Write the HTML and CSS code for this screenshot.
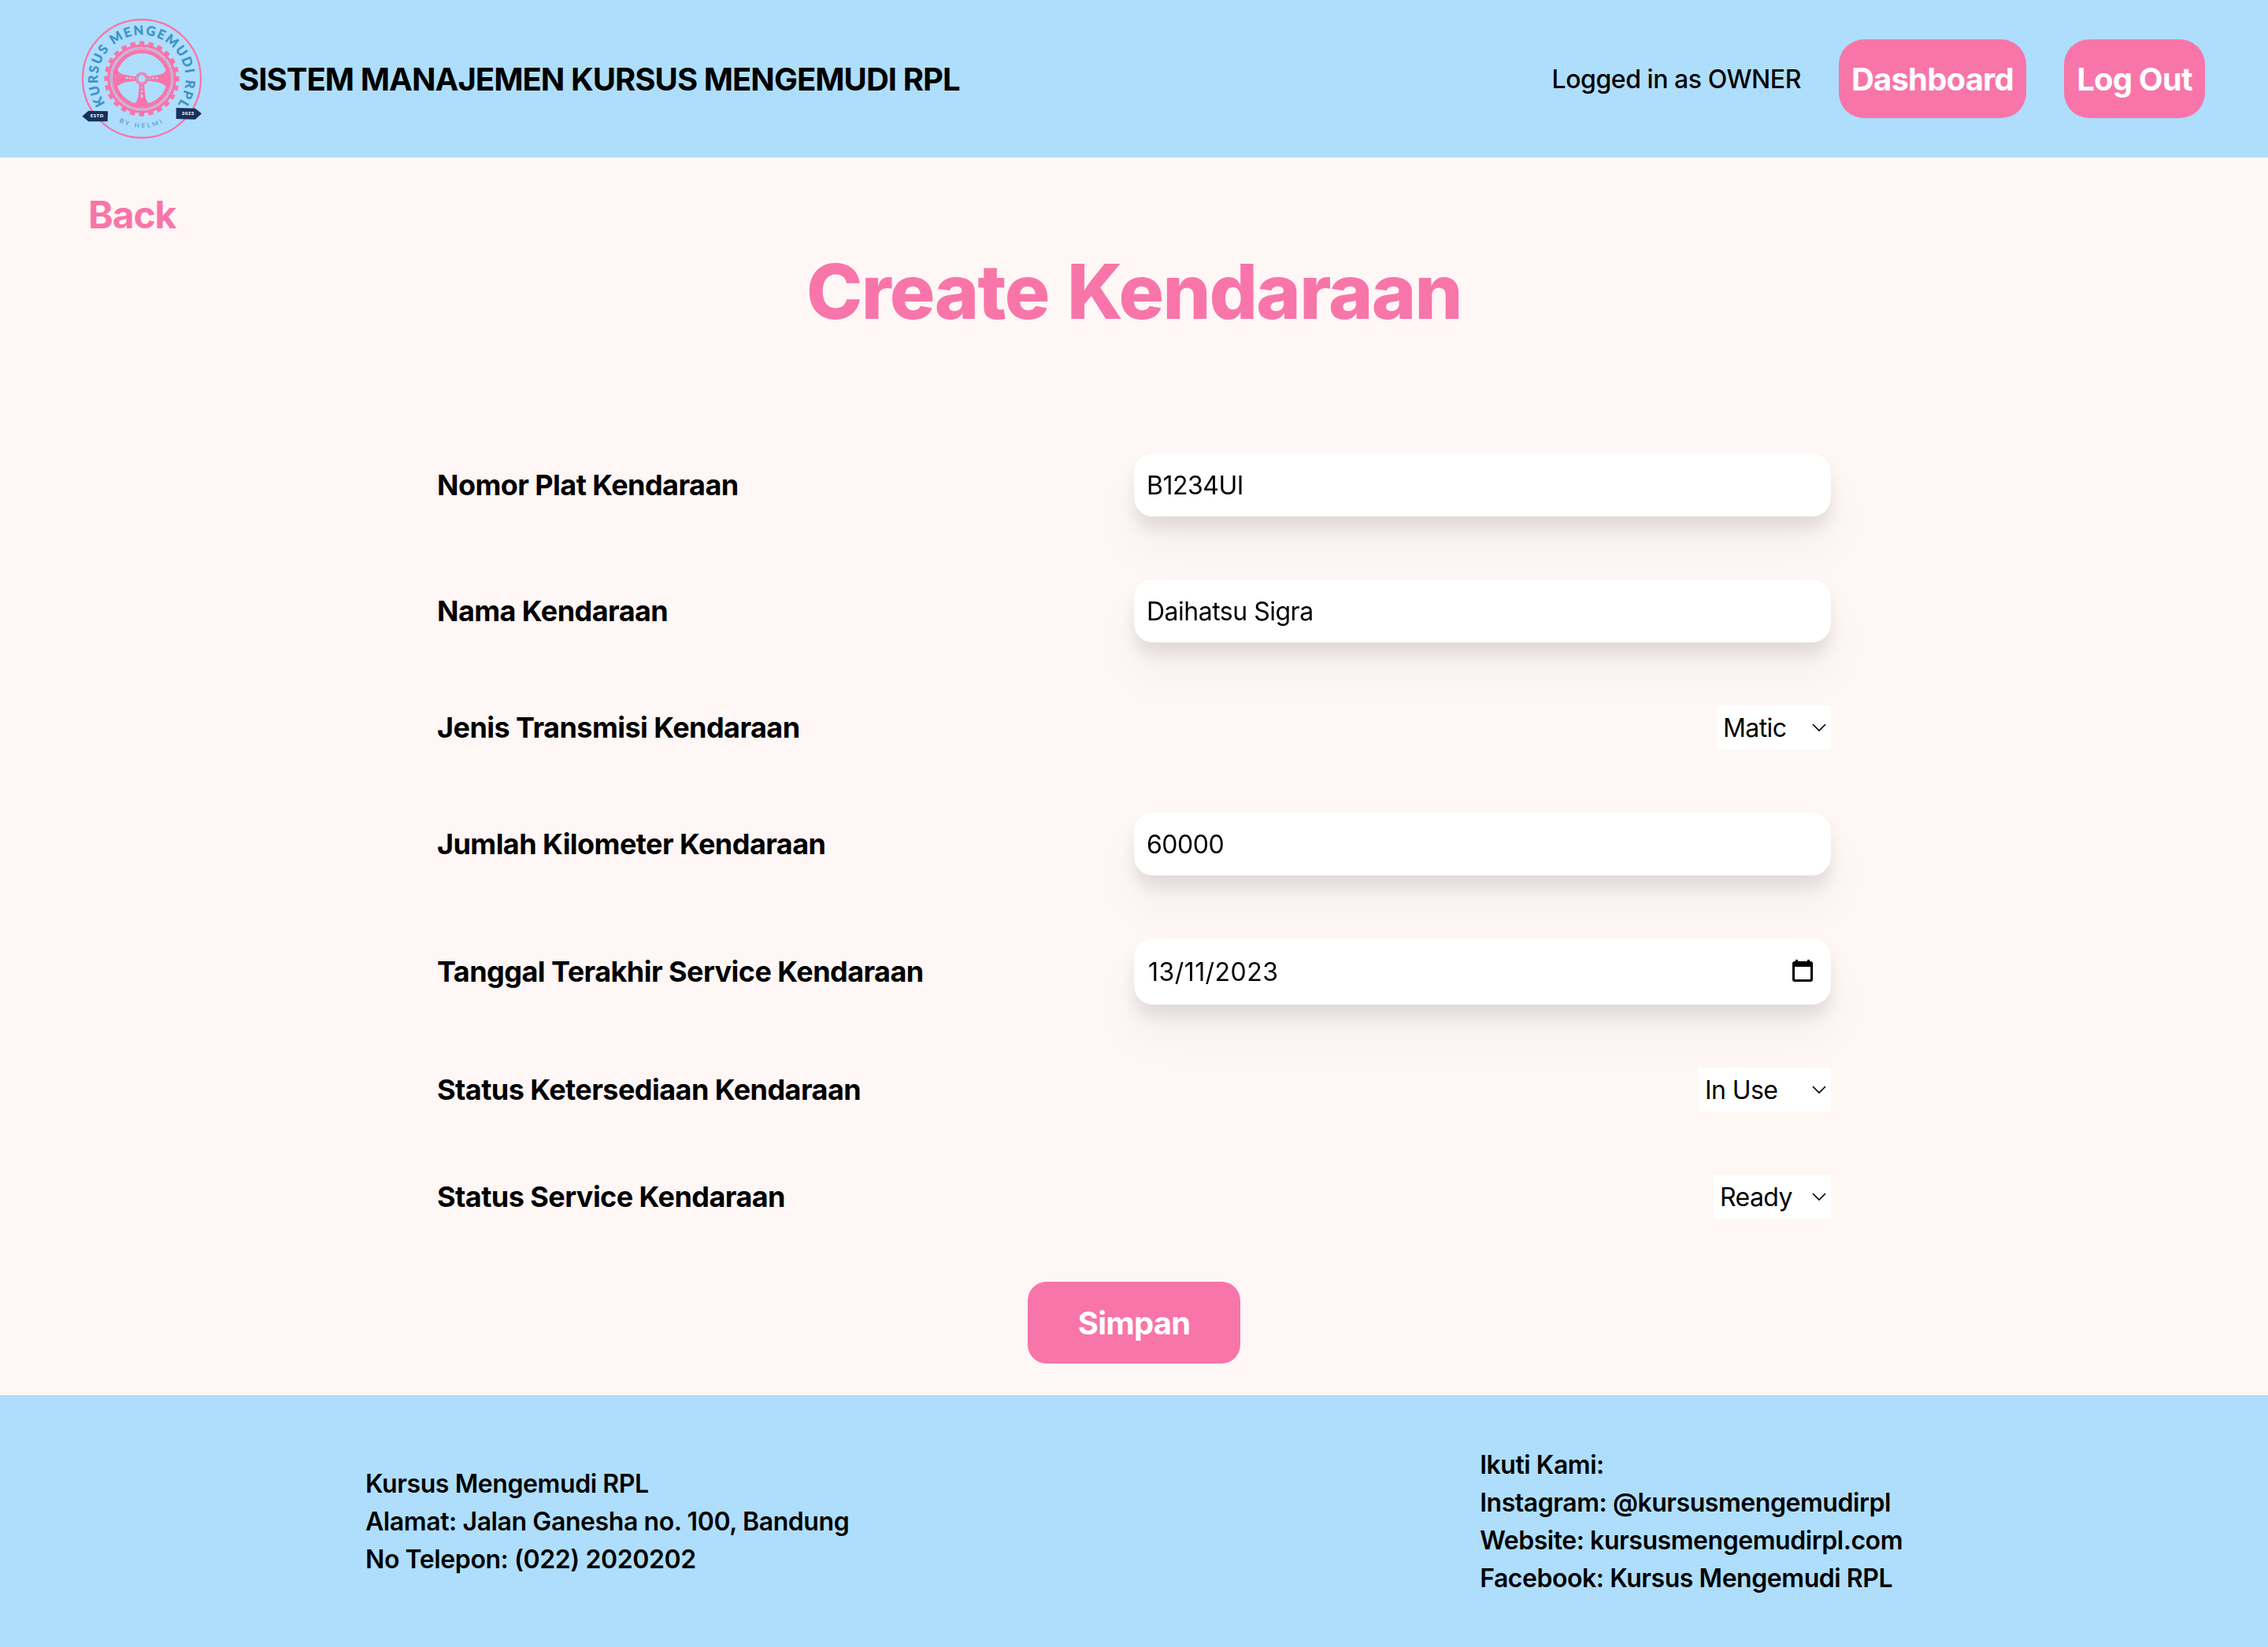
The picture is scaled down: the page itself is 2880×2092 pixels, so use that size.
FILE: index.html
```html
<!DOCTYPE html>
<html lang="id">
<head>
<meta charset="utf-8">
<title>Create Kendaraan</title>
<link rel="stylesheet" href="styles.css">
</head>
<body>
<header class="navbar">
  <div class="brand">
    <svg class="logo" viewBox="0 0 600 600">
      <defs>
        <path id="arcTop" d="M160.700 394.500 A168 168 0 1 1 439.300 394.500"/>
        <path id="arcBottom" d="M187 449 A187 187 0 0 0 413 449"/>
      </defs>
      <circle cx="300" cy="300" r="225" fill="none" stroke="#f875aa" stroke-width="7"/>
      <circle cx="300" cy="300" r="126" fill="none" stroke="#f875aa" stroke-width="11"/>
      <circle cx="300" cy="300" r="135.500" fill="none" stroke="#f875aa" stroke-width="15" stroke-dasharray="19.470 16" stroke-dashoffset="9.700" transform="rotate(-90 300 300)"/>
      <circle cx="300" cy="300" r="116" fill="none" stroke="#f875aa" stroke-width="3"/>
      <circle cx="300" cy="300" r="104.500" fill="none" stroke="#f875aa" stroke-width="15"/>
      <path fill="#f875aa" d="M202 262 Q212 282 240 286 L278 292 V308 L240 313 Q215 318 200 338 Z M398 262 Q388 282 360 286 L322 292 V308 L360 313 Q385 318 400 338 Z M291 320 H309 L313 362 Q315 386 334 402 H266 Q285 386 287 362 Z"/>
      <circle cx="300" cy="300" r="25" fill="#f875aa"/>
      <circle cx="300" cy="300" r="19" fill="none" stroke="#aedefc" stroke-width="3" stroke-dasharray="5 3"/>
      <circle cx="300" cy="300" r="14" fill="#aedefc"/>
      <g fill="#aedefc">
        <circle cx="243" cy="297" r="4"/><circle cx="257" cy="298" r="3.500"/><circle cx="269" cy="299" r="2.500"/>
        <circle cx="357" cy="297" r="4"/><circle cx="343" cy="298" r="3.500"/><circle cx="331" cy="299" r="2.500"/>
        <circle cx="300" cy="334" r="3"/><circle cx="300" cy="348" r="4"/><rect x="296" y="360" width="8" height="12" rx="3"/>
      </g>
      <text class="logo-name" textLength="730"><textPath href="#arcTop" textLength="730">KURSUS MENGEMUDI RPL</textPath></text>
      <text class="logo-by"><textPath href="#arcBottom" startOffset="50%">BY HELMI</textPath></text>
      <path fill="#17305c" d="M73 443 L97 422 L171 424 L170 463 L97 463 Z M431 411 L504 413 L528 433 L504 455 L431 453 Z"/>
      <text class="logo-tag" x="130" y="448">ESTD</text>
      <text class="logo-tag" x="476" y="439">2023</text>
    </svg>
    <span class="brand-name">SISTEM MANAJEMEN KURSUS MENGEMUDI RPL</span>
  </div>
  <nav class="nav-actions">
    <span class="login-info">Logged in as OWNER</span>
    <a class="nav-button dashboard">Dashboard</a>
    <a class="nav-button logout">Log Out</a>
  </nav>
</header>
<main class="content">
  <a class="back">Back</a>
  <h1 class="title">Create Kendaraan</h1>
  <form class="form">
    <div class="row"><label class="label">Nomor Plat Kendaraan</label><div class="input">B1234UI</div></div>
    <div class="row"><label class="label">Nama Kendaraan</label><div class="input">Daihatsu Sigra</div></div>
    <div class="row"><label class="label">Jenis Transmisi Kendaraan</label>
      <div class="select transmission">Matic<svg class="chevron" viewBox="0 0 18 10"><path d="M1 1 L9 9 L17 1"/></svg></div></div>
    <div class="row"><label class="label">Jumlah Kilometer Kendaraan</label><div class="input">60000</div></div>
    <div class="row"><label class="label">Tanggal Terakhir Service Kendaraan</label>
      <div class="input date">13/11/2023<svg class="calendar" viewBox="0 0 26 28"><path fill-rule="evenodd" d="M4 0H7V2H19V0H22V2H23Q26 2 26 5V25Q26 28 23 28H3Q0 28 0 25V5Q0 2 3 2H4Z M3 9V25H23V9Z"/></svg></div></div>
    <div class="row"><label class="label">Status Ketersediaan Kendaraan</label>
      <div class="select availability">In Use<svg class="chevron" viewBox="0 0 18 10"><path d="M1 1 L9 9 L17 1"/></svg></div></div>
    <div class="row"><label class="label">Status Service Kendaraan</label>
      <div class="select service">Ready<svg class="chevron" viewBox="0 0 18 10"><path d="M1 1 L9 9 L17 1"/></svg></div></div>
    <button class="submit" type="button">Simpan</button>
  </form>
</main>
<footer class="footer">
  <div class="footer-col address">
    <p>Kursus Mengemudi RPL</p>
    <p>Alamat: Jalan Ganesha no. 100, Bandung</p>
    <p>No Telepon: (022) 2020202</p>
  </div>
  <div class="footer-col social">
    <p>Ikuti Kami:</p>
    <p>Instagram: @kursusmengemudirpl</p>
    <p>Website: kursusmengemudirpl.com</p>
    <p>Facebook: Kursus Mengemudi RPL</p>
  </div>
</footer>
</body>
</html>
```
FILE: styles.css
```css
* { box-sizing: border-box; margin: 0; padding: 0; }
body {
  font-family: Inter, "Liberation Sans", sans-serif;
  background: #fff6f6;
  color: #000;
  min-height: 2092px;
  display: flex;
  flex-direction: column;
  font-size: 32px;
  line-height: 48px;
}
.navbar {
  height: 200px;
  background: #aedefc;
  display: flex;
  align-items: center;
  justify-content: space-between;
  padding: 0 80px;
}
.brand { display: flex; align-items: center; gap: 23px; }
.logo { width: 200px; height: 200px; }
.logo-name { font: 700 49px Lato, sans-serif; fill: #3d94c9; stroke: #3d94c9; stroke-width: 1.500px; }
.logo-by { font: 400 24px Lato, sans-serif; fill: #3d94c9; letter-spacing: 9px; text-anchor: middle; }
.logo-tag { font: 900 18px Lato, sans-serif; fill: #fff; letter-spacing: 1.500px; text-anchor: middle; }
.brand-name { font-size: 40px; font-weight: 650; line-height: 56px; letter-spacing: -0.95px; white-space: nowrap; padding-top: 1px; }
.nav-actions { display: flex; align-items: center; gap: 48px; }
.login-info { font-weight: 540; letter-spacing: -0.45px; padding-top: 2px; }
.nav-button {
  height: 100px;
  border-radius: 32px;
  background: #f875aa;
  color: #fff;
  font-size: 40px;
  font-weight: 700;
  letter-spacing: -0.82px;
  display: flex;
  align-items: center;
  justify-content: center;
  white-space: nowrap;
  padding-top: 1px;
}
.dashboard { width: 238px; }
.logout { width: 179px; }
.content { height: 1572px; display: flex; flex-direction: column; align-items: center; padding-top: 41px; }
.back { align-self: flex-start; margin-left: 112px; font-size: 48px; font-weight: 700; line-height: 64px; letter-spacing: -1.1px; color: #f875aa; }
.title { margin-top: 17px; font-size: 96px; line-height: 96px; font-weight: 800; letter-spacing: -1.65px; word-spacing: 4px; color: #f875aa; white-space: nowrap; }
.form { width: 1770px; margin-top: 158px; display: flex; flex-direction: column; gap: 80px; }
.row { display: flex; align-items: center; justify-content: space-between; }
.label { font-size: 36px; font-weight: 700; line-height: 56px; letter-spacing: -0.55px; white-space: nowrap; }
.input {
  width: 885px;
  height: 80px;
  border-radius: 24px;
  background: #fff;
  padding: 2px 16px 0;
  display: flex;
  align-items: center;
  justify-content: space-between;
  letter-spacing: -0.5px;
  filter: drop-shadow(0 40px 26px rgb(0 0 0 / 0.03)) drop-shadow(0 16px 10px rgb(0 0 0 / 0.09));
}
.date { height: 84px; padding: 2px 23px 0 18px; letter-spacing: 0.45px; }
.calendar { width: 26px; height: 28px; margin-bottom: 4px; }
.select {
  height: 56px;
  background: #fff;
  padding: 2px 6px 0 8px;
  display: flex;
  align-items: center;
  justify-content: space-between;
  letter-spacing: -0.6px;
}
.transmission { width: 145px; }
.availability { width: 168px; }
.service { width: 149px; }
.chevron { width: 18px; height: 10px; margin-bottom: 2px; fill: none; stroke: #000; stroke-width: 1.700px; }
.submit {
  align-self: center;
  width: 270px;
  height: 104px;
  border: 0;
  border-radius: 24px;
  background: #f875aa;
  color: #fff;
  font-family: inherit;
  font-size: 40px;
  font-weight: 700;
  letter-spacing: -0.8px;
}
.footer {
  height: 320px;
  background: #aedefc;
  display: flex;
  align-items: center;
  justify-content: space-between;
  padding: 2px 464px 0;
  font-weight: 600;
  letter-spacing: -0.41px;
  white-space: nowrap;
}
.social { letter-spacing: -0.45px; }
```
